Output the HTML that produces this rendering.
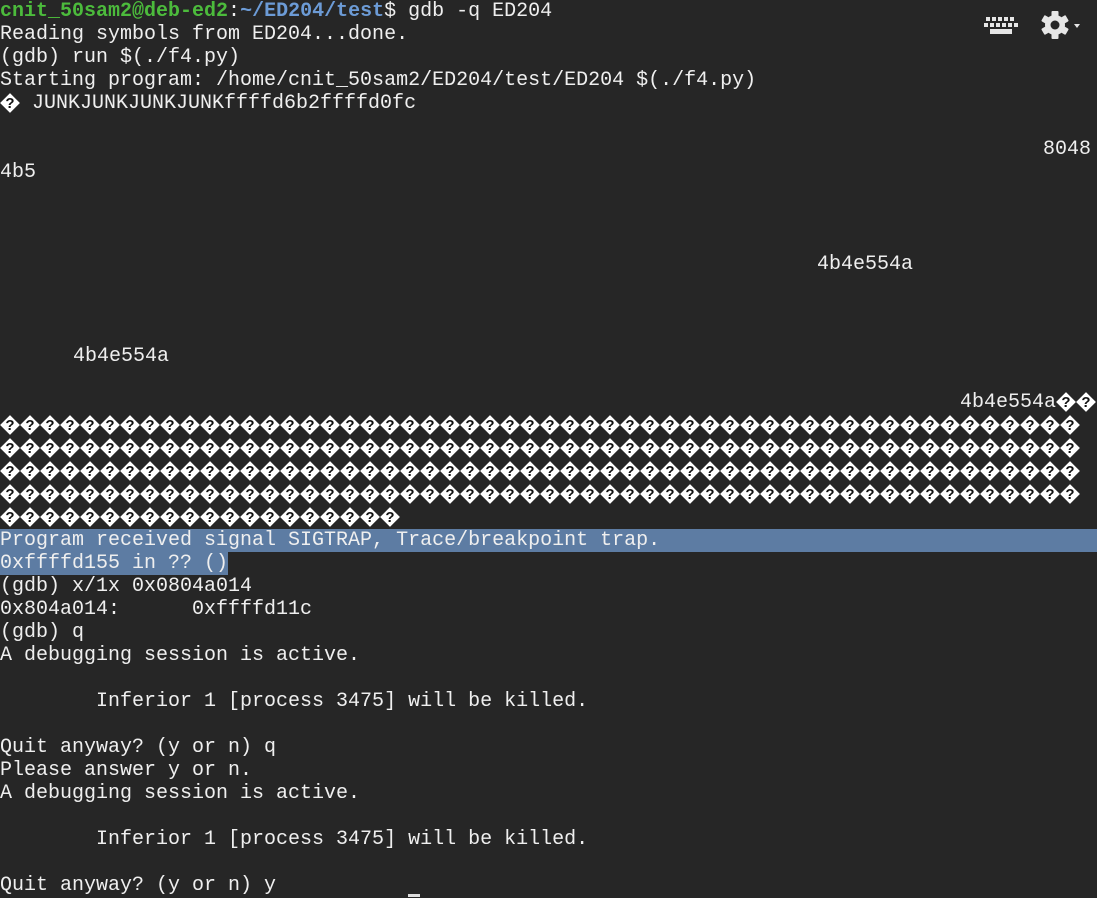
<!DOCTYPE html>
<html><head><meta charset="utf-8"><style>
html,body{margin:0;padding:0;background:#262626;width:1097px;height:898px;overflow:hidden}
.t{position:relative;top:1px;width:1097px;height:898px;font-family:"Liberation Mono",monospace;font-size:20px;color:#efefef}
.l{position:absolute;left:0;height:23px;line-height:23px;white-space:pre}
.g{color:#4cbb3c;font-weight:bold}.b{color:#6c9bd6;font-weight:bold}
.hl{background:#5d7ca3}
.q{display:inline-block;width:20px;height:23px;vertical-align:top;position:relative}
.q::before{content:"";position:absolute;left:3px;top:4px;width:14px;height:14px;background:#fff;transform:rotate(45deg)}
.q::after{content:"?";position:absolute;left:0;width:20px;text-align:center;top:0;color:#111;font-family:"Liberation Sans",sans-serif;font-weight:bold;font-size:15px;line-height:23px}
</style></head><body><div class="t">
<div class="l" style="top:-1px"><span class="g">cnit_50sam2@deb-ed2</span>:<span class="b">~/ED204/test</span>$ gdb -q ED204</div>
<div class="l" style="top:22px">Reading symbols from ED204...done.</div>
<div class="l" style="top:45px">(gdb) run $(./f4.py)</div>
<div class="l" style="top:68px">Starting program: /home/cnit_50sam2/ED204/test/ED204 $(./f4.py)</div>
<div class="l" style="top:91px"><span class="q"></span> JUNKJUNKJUNKJUNKffffd6b2ffffd0fc</div>
<div class="l" style="top:137px;left:1043px">8048</div>
<div class="l" style="top:160px">4b5</div>
<div class="l" style="top:252px;left:817px">4b4e554a</div>
<div class="l" style="top:344px;left:73px">4b4e554a</div>
<div class="l" style="top:390px;left:960px">4b4e554a<span class="q"></span><span class="q"></span></div>
<div class="l" style="top:413px" id="r1"></div>
<div class="l" style="top:436px" id="r2"></div>
<div class="l" style="top:459px" id="r3"></div>
<div class="l" style="top:482px" id="r4"></div>
<div class="l" style="top:505px" id="r5"></div>
<div class="l hl" style="top:528px;width:1097px">Program received signal SIGTRAP, Trace/breakpoint trap.</div>
<div class="l" style="top:551px"><span class="hl">0xffffd155 in ?? ()</span></div>
<div class="l" style="top:574px">(gdb) x/1x 0x0804a014</div>
<div class="l" style="top:597px">0x804a014:      0xffffd11c</div>
<div class="l" style="top:620px">(gdb) q</div>
<div class="l" style="top:643px">A debugging session is active.</div>
<div class="l" style="top:689px">        Inferior 1 [process 3475] will be killed.</div>
<div class="l" style="top:735px">Quit anyway? (y or n) q</div>
<div class="l" style="top:758px">Please answer y or n.</div>
<div class="l" style="top:781px">A debugging session is active.</div>
<div class="l" style="top:827px">        Inferior 1 [process 3475] will be killed.</div>
<div class="l" style="top:873px">Quit anyway? (y or n) y</div>
<div style="position:absolute;left:408px;top:893px;width:12px;height:3px;background:#ddd"></div>
<svg style="position:absolute;left:984px;top:14px" width="34" height="22" viewBox="0 0 34 22" fill="#e6e6e6">
<g><rect x="2" y="2" width="4" height="4"/><rect x="8" y="2" width="4" height="4"/><rect x="14" y="2" width="4" height="4"/><rect x="20" y="2" width="4" height="4"/><rect x="26" y="2" width="4" height="4"/>
<rect x="0" y="8" width="4" height="4"/><rect x="6" y="8" width="4" height="4"/><rect x="12" y="8" width="4" height="4"/><rect x="18" y="8" width="4" height="4"/><rect x="24" y="8" width="4" height="4"/><rect x="30" y="8" width="4" height="4"/>
<rect x="6" y="14" width="22" height="5"/></g></svg>
<svg style="position:absolute;left:1040px;top:9px" width="44" height="30" viewBox="0 0 44 30">
<g transform="translate(15,15)" fill="#e6e6e6">
<rect x="-3.5" y="-14" width="7" height="28" rx="1"/>
<rect x="-3.5" y="-14" width="7" height="28" rx="1" transform="rotate(60)"/>
<rect x="-3.5" y="-14" width="7" height="28" rx="1" transform="rotate(120)"/>
<circle r="10"/><circle r="4.5" fill="#262626"/></g>
<path d="M34 14 L40 14 L37 18 Z" fill="#e6e6e6"/></svg>
</div>
<script>
function f(id,n){var s="";for(var i=0;i<n;i++)s+='<span class="q"></span>';document.getElementById(id).innerHTML=s;}
f("r1",54);f("r2",54);f("r3",54);f("r4",54);f("r5",20);
</script>
</body></html>
